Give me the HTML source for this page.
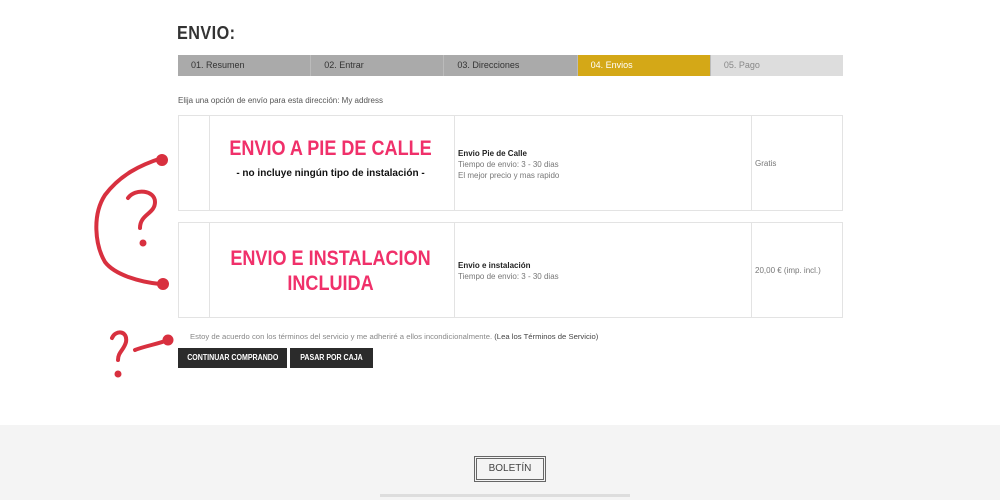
<!DOCTYPE html>
<html><head><meta charset="utf-8"><style>
*{margin:0;padding:0;box-sizing:border-box}
body{width:1000px;height:500px;overflow:hidden;background:#fff;font-family:"Liberation Sans",sans-serif;position:relative;color:#555}
.a{position:absolute}
h1{position:absolute;left:177px;top:23px;font-size:18px;font-weight:bold;color:#333;letter-spacing:0.5px;transform:scaleX(0.9);transform-origin:left}
.steps{position:absolute;left:178px;top:55px;width:665px;height:21px;display:flex}
.steps div{flex:1;font-size:9px;line-height:21px;padding-left:13px;color:#333;background:#aaa;border-right:1px solid #bbb}
.steps .on{background:#d4a817;color:#fff}
.steps .off{background:#ddd;color:#888;border:none}
.row{position:absolute;left:178px;width:665px;border:1px solid #e3e3e3}
.row div{position:absolute;top:0;bottom:0;border-left:1px solid #e3e3e3}
.big{color:#f0306a;font-weight:bold;font-size:21px;text-align:center;position:absolute;left:208px;width:245px;transform:scaleX(0.86)}
.sm{font-size:8px;line-height:11px;color:#777}
.btn{position:absolute;top:348px;height:20px;background:#2b2b2b;color:#fff;font-size:8px;font-weight:bold;line-height:20px;text-align:center}
.btn span{display:inline-block;transform:scaleX(0.88)}
</style></head><body>
<h1>ENVIO:</h1>
<div class="steps"><div>01. Resumen</div><div>02. Entrar</div><div>03. Direcciones</div><div class="on">04. Envios</div><div class="off">05. Pago</div></div>
<div class="a sm" style="left:178px;top:95px;color:#555">Elija una opción de envío para esta dirección: My address</div>
<div class="row" style="top:115px;height:96px"><div style="left:30px"></div><div style="left:275px"></div><div style="left:572px"></div></div>
<div class="row" style="top:222px;height:96px"><div style="left:30px"></div><div style="left:275px"></div><div style="left:572px"></div></div>
<div class="big" style="top:137px">ENVIO A PIE DE CALLE</div>
<div class="a" style="left:208px;width:245px;text-align:center;top:168px;font-size:10px;font-weight:bold;color:#111">- no incluye ningún tipo de instalación -</div>
<div class="big" style="top:246px;line-height:25px">ENVIO E INSTALACION<br>INCLUIDA</div>
<div class="a sm" style="left:458px;top:148px"><b style="color:#222">Envio Pie de Calle</b><br>Tiempo de envio: 3 - 30 dias<br>El mejor precio y mas rapido</div>
<div class="a sm" style="left:458px;top:260px"><b style="color:#222">Envio e instalación</b><br>Tiempo de envio: 3 - 30 dias</div>
<div class="a sm" style="left:755px;top:158px">Gratis</div>
<div class="a sm" style="left:755px;top:265px">20,00 € (imp. incl.)</div>
<div class="a sm" style="left:190px;top:331px;color:#888;font-size:7.7px">Estoy de acuerdo con los términos del servicio y me adheriré a ellos incondicionalmente. <span style="color:#444">(Lea los Términos de Servicio)</span></div>
<div class="btn" style="left:178px;width:109px"><span>CONTINUAR COMPRANDO</span></div>
<div class="btn" style="left:290px;width:83px"><span>PASAR POR CAJA</span></div>
<div class="a" style="left:0;top:425px;width:1000px;height:75px;background:#f4f4f4"></div>
<div class="a" style="left:474px;top:456px;width:72px;height:26px;border:3px double #666;font-size:10px;line-height:20px;text-align:center;color:#444">BOLETÍN</div>
<div class="a" style="left:380px;top:494px;width:250px;height:3px;background:#ddd"></div>
<svg class="a" style="left:0;top:0" width="1000" height="500" fill="none" stroke="#d8303f" stroke-width="4" stroke-linecap="round">
<path d="M162 158 C140 165 120 175 105 195 C92 215 95 245 105 262 C115 275 140 282 160 284"/>
<path d="M128 198 C135 188 155 190 155 202 C155 214 140 214 140 228"/>
<circle cx="143" cy="243" r="1.5" fill="#d8303f"/>
<circle cx="162" cy="160" r="4" fill="#d8303f"/>
<circle cx="163" cy="284" r="4" fill="#d8303f"/>
<path d="M112 338 C115 330 128 330 126 342 C124 350 118 352 118 360"/>
<circle cx="118" cy="374" r="1.5" fill="#d8303f"/>
<path d="M135 350 C145 346 158 344 168 340"/>
<circle cx="168" cy="340" r="3.5" fill="#d8303f"/>
</svg>
</body></html>
